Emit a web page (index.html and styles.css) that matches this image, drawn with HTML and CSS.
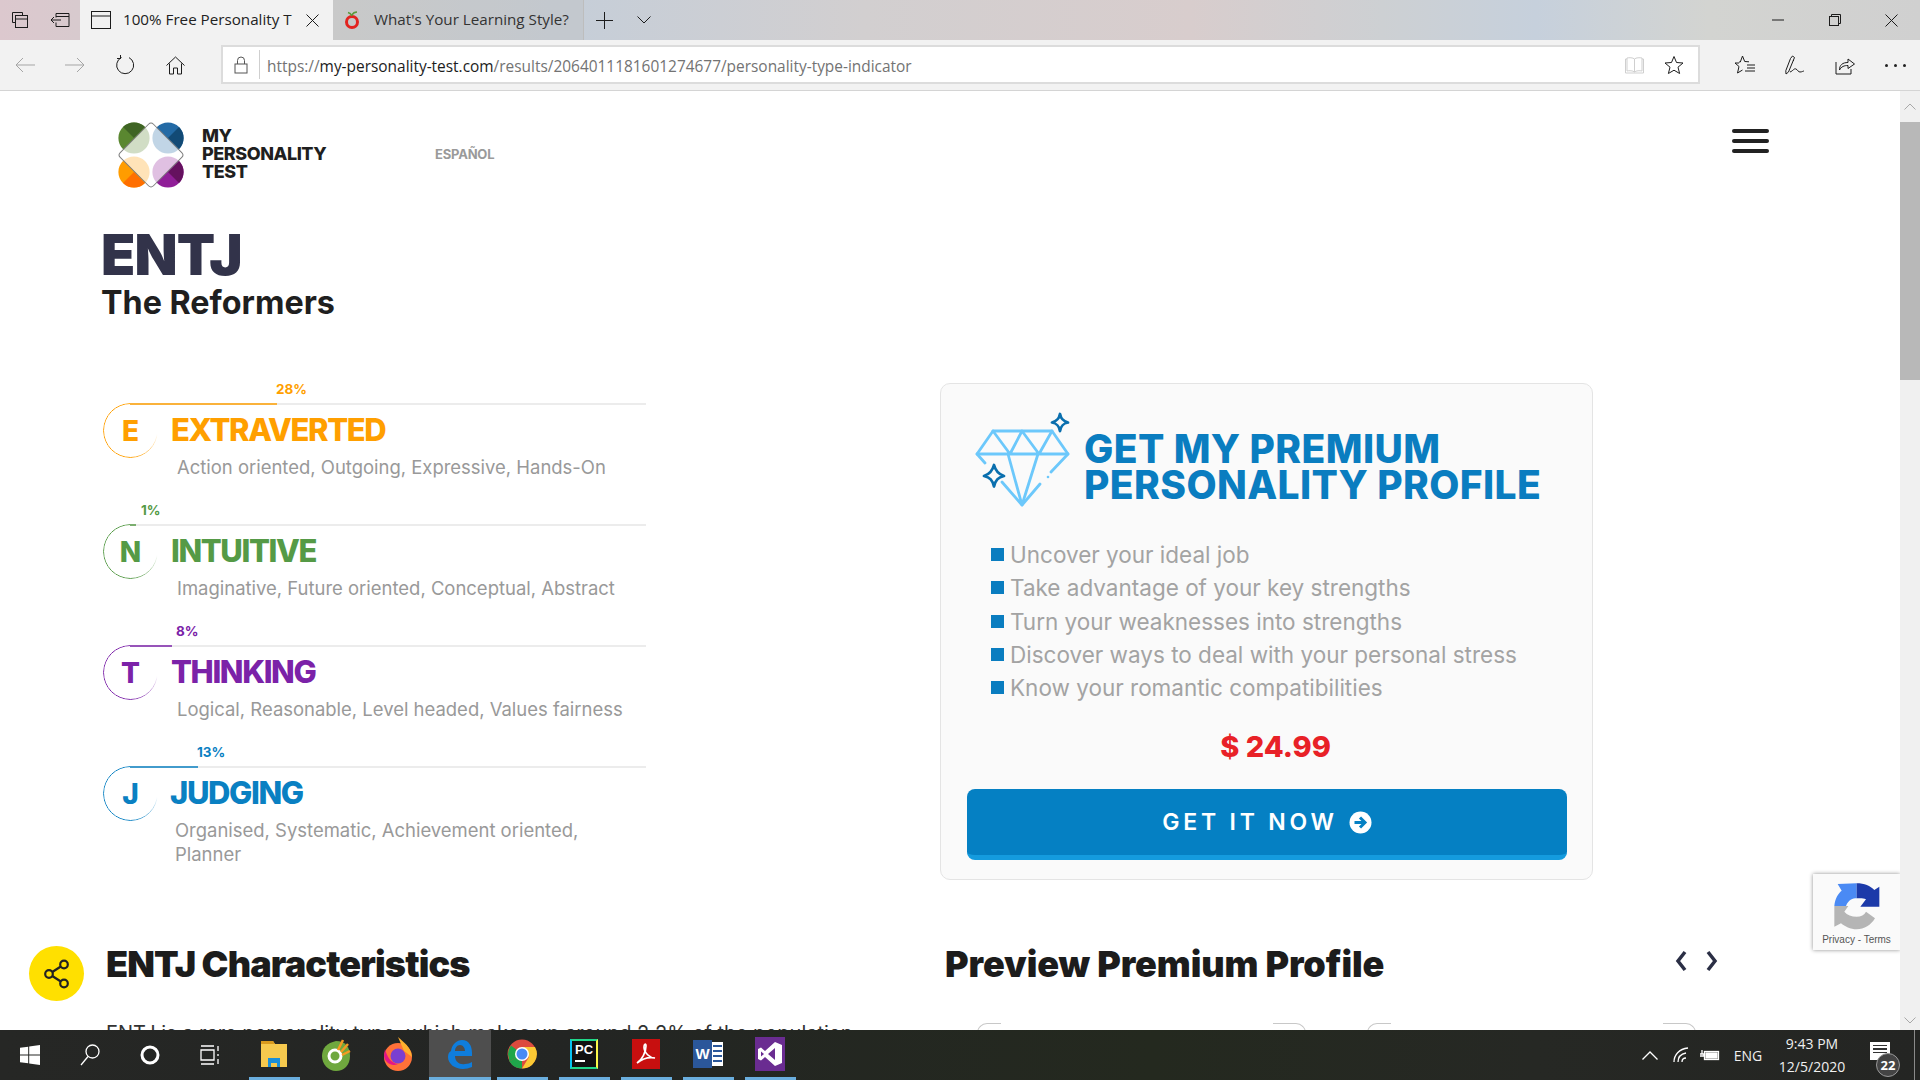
FILE: index.html
```html
<!DOCTYPE html>
<html lang="en">
<head>
<meta charset="utf-8">
<title>100% Free Personality Test</title>
<link rel="stylesheet" href="styles.css">
</head>
<body>
<div class="titlebar">
  <div class="slot40"><svg class="ic" width="18" height="18" viewBox="0 0 18 18"><path d="M1.5 1.5h10v3M1.5 1.5v10h3"/><rect x="4.5" y="4.5" width="12" height="12"/><path d="M4.5 8h12"/></svg></div>
  <div class="slot40"><svg class="ic" width="20" height="16" viewBox="0 0 20 16"><path d="M6 1.5h13v13H6v-4M6 1.5v4M6 4.5h13M11 8H1M4 5L1 8l3 3"/></svg></div>
  <div class="tab tab-active">
    <svg class="ic" width="20" height="18" viewBox="0 0 20 18"><rect x="0.5" y="0.5" width="19" height="17"/><path d="M0.5 5h19"/></svg>
    <span class="tab-text tab-text-a">100% Free Personality T</span>
    <svg class="ic tab-x" width="13" height="13" viewBox="0 0 13 13"><path d="M0.5 0.5l12 12M12.5 0.5l-12 12"/></svg>
  </div>
  <div class="tab tab-other">
    <svg width="16" height="20" viewBox="0 0 16 20"><circle cx="8" cy="12" r="5.5" fill="none" stroke="#e2231f" stroke-width="3"/><path d="M8 6C7 4 6 3 4 2.5M8 5c1-2 3-3 5-3" fill="none" stroke="#5a9a3a" stroke-width="1.6"/></svg>
    <span class="tab-text tab-text-b">What's Your Learning Style?</span>
  </div>
  <div class="slot40"><svg class="ic" width="17" height="17" viewBox="0 0 17 17"><path d="M8.5 0v17M0 8.5h17"/></svg></div>
  <div class="slot40"><svg class="ic" width="14" height="8" viewBox="0 0 14 8"><path d="M0.5 0.5L7 7l6.5-6.5"/></svg></div>
  <div class="spacer"></div>
  <div class="win"><svg class="ic" width="12" height="2" viewBox="0 0 12 2"><path d="M0 1h12"/></svg></div>
  <div class="win"><svg class="ic" width="12" height="12" viewBox="0 0 12 12"><rect x="0.5" y="2.5" width="9" height="9"/><path d="M2.5 2.5v-2h9v9h-2"/></svg></div>
  <div class="win"><svg class="ic" width="13" height="13" viewBox="0 0 13 13"><path d="M0.5 0.5l12 12M12.5 0.5l-12 12"/></svg></div>
</div>

<div class="toolbar">
  <div class="slot50 dim"><svg class="ic" width="20" height="16" viewBox="0 0 20 16"><path d="M20 8H1M8 1L1 8l7 7"/></svg></div>
  <div class="slot50 dim"><svg class="ic" width="20" height="16" viewBox="0 0 20 16"><path d="M0 8h19M12 1l7 7-7 7"/></svg></div>
  <div class="slot50"><svg class="ic" width="20" height="20" viewBox="0 0 20 20"><path d="M6.5 2.5A8.5 8.5 0 1 0 14 2.6M5.5 0v3.5H2"/></svg></div>
  <div class="slot50"><svg class="ic" width="19" height="19" viewBox="0 0 19 19"><path d="M0.5 9.5L9.5 1l9 8.5M3.5 7.5V18h4v-6h4v6h4V7.5"/></svg></div>
  <div class="address">
    <div class="lock"><svg class="ic lock-ic" width="14" height="18" viewBox="0 0 14 18"><rect x="1" y="8" width="12" height="9"/><path d="M3.5 8V4.5a3.5 3.5 0 0 1 7 0V8"/></svg></div>
    <div class="url"><span class="url-dim">https://</span>my-personality-test.com<span class="url-dim">/results/2064011181601274677/personality-type-indicator</span></div>
    <svg class="ic book" width="19" height="18" viewBox="0 0 19 18"><path d="M9.500 3C8 1.500 4 1.500 2 2v13c2-.5 6-.5 7.500 1 1.500-1.500 5.500-1.500 7.500-1V2c-2-.5-6-.5-7.500 1zM9.500 3v13M2 3H.5v14h18V3H17"/></svg>
    <svg class="ic star" width="20" height="20" viewBox="0 0 20 20"><path d="M10 1.500l2.500 6 6.500.5-5 4.200 1.600 6.300L10 15.200 4.400 18.500 6 12.200 1 8l6.500-.5z"/></svg>
  </div>
  <div class="slot50 first-right"><svg class="ic" width="22" height="20" viewBox="0 0 22 20"><path d="M8.500 1l2.200 5.500 4.300.3M5 8H1l4 3.500L3.500 18l5-3M13 10h8M13 13h8M11 16h10M8.500 1L6.300 7H5"/></svg></div>
  <div class="slot50"><svg class="ic" width="20" height="20" viewBox="0 0 20 20"><path d="M5.500 3.500l2-2.500 2 1.500L3.500 17 1 19l-.2-3.300zM8 5l1 1M5 17c3-1 4-4 6-3s2 3 4 3 3-1 4-1"/></svg></div>
  <div class="slot50"><svg class="ic" width="20" height="19" viewBox="0 0 20 19"><path d="M1 6v12h15v-5M4.500 14c0-5 3-7.500 8.500-7.500V3l6.500 5-6.500 4.500V9.500c-4 0-6.500 1-8.500 4.500z"/></svg></div>
  <div class="slot50"><span class="more"><i></i><i></i><i></i></span></div>
</div>

<div class="viewport">
  <div class="page">
    <header class="site-head">
      <a class="brand">
        <svg width="66" height="66" viewBox="0 0 66 66">
          <circle cx="16" cy="16" r="15.600" fill="#5a8730"/><path d="M16 16L5 5A15.600 15.600 0 0 1 27 5Z" fill="#3f6424"/>
          <circle cx="50" cy="16" r="15.600" fill="#236aa5"/><path d="M50 16L61 5A15.600 15.600 0 0 1 61 27Z" fill="#124a75"/>
          <circle cx="16" cy="50" r="15.600" fill="#ff9c00"/><path d="M16 50L27 61A15.600 15.600 0 0 1 5 61Z" fill="#ff6f00"/>
          <circle cx="50" cy="50" r="15.600" fill="#901e98"/><path d="M50 50L61 39A15.600 15.600 0 0 1 61 61Z" fill="#65115f"/>
          <rect x="9.500" y="9.500" width="47" height="47" rx="3.500" transform="rotate(45 33 33)" fill="#fff" fill-opacity=".72" stroke="#7d7d7d"/>
        </svg>
        <span class="brand-text">MY<br>PERSONALITY<br>TEST</span>
      </a>
      <span class="lang">ESPAÑOL</span>
      <span class="burger"><i></i><i></i><i></i></span>
    </header>

    <h1 class="type-code">ENTJ</h1>
    <h2 class="type-name">The Reformers</h2>

    <div class="result-grid">
      <div class="traits">
        <section class="trait t-e">
          <div class="pct" style="margin-left:173px">28%</div>
          <div class="bar"><div class="fill" style="width:147px"></div></div>
          <div class="trait-body"><div class="letter">E</div><div class="trait-copy"><h3>EXTRAVERTED</h3><p>Action oriented, Outgoing, Expressive, Hands-On</p></div></div>
        </section>
        <section class="trait t-n">
          <div class="pct" style="margin-left:38px">1%</div>
          <div class="bar"><div class="fill" style="width:6px"></div></div>
          <div class="trait-body"><div class="letter">N</div><div class="trait-copy"><h3>INTUITIVE</h3><p>Imaginative, Future oriented, Conceptual, Abstract</p></div></div>
        </section>
        <section class="trait t-t">
          <div class="pct" style="margin-left:73px">8%</div>
          <div class="bar"><div class="fill" style="width:42px"></div></div>
          <div class="trait-body"><div class="letter">T</div><div class="trait-copy"><h3>THINKING</h3><p>Logical, Reasonable, Level headed, Values fairness</p></div></div>
        </section>
        <section class="trait t-j">
          <div class="pct" style="margin-left:94px">13%</div>
          <div class="bar"><div class="fill" style="width:68px"></div></div>
          <div class="trait-body"><div class="letter">J</div><div class="trait-copy shift"><h3>JUDGING</h3><p>Organised, Systematic, Achievement oriented, Planner</p></div></div>
        </section>
      </div>

      <aside class="offer">
        <div class="offer-head">
          <svg class="gem" width="120" height="120" viewBox="0 0 120 120">
            <g fill="none" stroke="#6cc8fb" stroke-width="2.800" stroke-linejoin="round" stroke-linecap="round">
              <path d="M25 61L17 52 33 29H92L108 52 91 70M80 82L62 103 42 80"/>
              <path d="M17 52H108M33 29L50 52 62 29 79 52 92 29M48 52L62 103 78 52"/>
            </g>
            <circle cx="88" cy="75" r="1.300" fill="#6cc8fb"/>
            <path d="M100 12c1 5 3 7 8 8.500-5 1-7 3-8 8.500-1-5.500-3-7.500-8-8.500 5-1.500 7-3.500 8-8.500z" fill="#fafafa" stroke="#0a6fae" stroke-width="2.800" stroke-linejoin="round"/>
            <path d="M34 63c1.500 6 4 9 10 11-6 1.500-8.500 4-10 10.500-1.500-6.500-4-9-10-10.500 6-2 8.500-5 10-11z" fill="#fafafa" stroke="#0a6fae" stroke-width="2.800" stroke-linejoin="round"/>
          </svg>
          <h2 class="offer-title">GET MY PREMIUM<br>PERSONALITY PROFILE</h2>
        </div>
        <ul class="perks">
          <li>Uncover your ideal job</li>
          <li>Take advantage of your key strengths</li>
          <li>Turn your weaknesses into strengths</li>
          <li>Discover ways to deal with your personal stress</li>
          <li>Know your romantic compatibilities</li>
        </ul>
        <div class="price">$ 24.99</div>
        <a class="buy">GET IT NOW
          <svg width="23" height="23" viewBox="0 0 23 23"><circle cx="11.500" cy="11.500" r="11" fill="#fff"/><path d="M5.500 11.500h10M11 6.500l5 5-5 5" fill="none" stroke="#0580c3" stroke-width="3"/></svg>
        </a>
      </aside>
    </div>

    <div class="lower-grid">
      <div class="lower-left">
        <h2 class="section-title title-a">ENTJ Characteristics</h2>
        <p class="lead">ENTJ is a rare personality type, which makes up around 2.2% of the population</p>
      </div>
      <div class="lower-right">
        <div class="preview-head">
          <h2 class="section-title title-b">Preview Premium Profile</h2>
          <span class="chev-group">
            <svg class="chev" width="14" height="22" viewBox="0 0 14 22"><path d="M11 2L4 11l7 9"/></svg>
            <svg class="chev" width="14" height="22" viewBox="0 0 14 22"><path d="M3 2l7 9-7 9"/></svg>
          </span>
        </div>
        <div class="previews"><div class="preview"></div><div class="preview"></div></div>
      </div>
    </div>

    <a class="share"><svg width="28" height="30" viewBox="0 0 28 30"><g fill="none" stroke="#222" stroke-width="2.200"><circle cx="21" cy="5.500" r="3.800"/><circle cx="21" cy="24.500" r="3.800"/><circle cx="6" cy="15" r="3.800"/><path d="M9.300 13L17.800 7.500M9.300 17l8.500 5.500"/></g></svg></a>

    <div class="captcha">
      <svg width="48" height="48" viewBox="66 36 144 144">
        <path d="M70 108C72 85 82 70 92 62L80 42 137 40V85C125 85 112 90 105 108Z" fill="#4a8af4"/>
        <path d="M137 40C160 40 178 48 190 60L205 50V110H148L165 88C157 84 148 85 137 85Z" fill="#1c3aa9"/>
        <path d="M70 108H112L100 125C108 135 122 140 137 140 150 140 160 135 165 125L192 145C180 165 160 178 137 178 118 178 102 170 90 160L70 170Z" fill="#b5b5b5"/>
      </svg>
      <span class="captcha-text">Privacy - Terms</span>
    </div>
  </div>
  <div class="scrollbar">
    <div class="sb-btn"><svg class="ic sb-ic" width="12" height="7" viewBox="0 0 12 7"><path d="M.5 6.500L6 1l5.500 5.500"/></svg></div>
    <div class="sb-thumb"></div>
    <div class="sb-track"></div>
    <div class="sb-btn sb-down"><svg class="ic sb-ic" width="12" height="7" viewBox="0 0 12 7"><path d="M.5.500L6 6l5.500-5.500"/></svg></div>
  </div>
</div>

<footer class="taskbar">
  <div class="tb-sys"><svg width="20" height="20" viewBox="0 0 20 20" fill="#fff"><path d="M0 2.800L8.200 1.700V9.500H0zM9.200 1.500L20 0V9.500H9.200zM0 10.500H8.200V18.300L0 17.200zM9.200 10.500H20V20L9.200 18.500z"/></svg></div>
  <div class="tb-sys"><svg class="ic-w" width="20" height="22" viewBox="0 0 20 22"><circle cx="12.500" cy="7.500" r="6.500"/><path d="M8 12.500L1 21"/></svg></div>
  <div class="tb-sys"><svg width="20" height="20" viewBox="0 0 20 20"><circle cx="10" cy="10" r="8" fill="none" stroke="#fff" stroke-width="3"/></svg></div>
  <div class="tb-sys"><svg class="ic-w" width="20" height="20" viewBox="0 0 20 20"><path d="M1 1h13M1 19h13M1 5h13v10H1zM18 1v5M18 9v2M18 14v5"/></svg></div>
  <div class="tb-apps">
    <div class="app on"><svg width="28" height="30" viewBox="0 0 28 30"><path d="M1 2h12l2 3h12v23H1z" fill="#f6c94e"/><path d="M1 2h12l2 3H1z" fill="#d99a1e"/><path d="M8 19h12v9h-3v-4h-6v4H8z" fill="#1b8fd8"/></svg></div>
    <div class="app"><svg width="30" height="34" viewBox="0 0 30 34"><path d="M15 4c9 0 14 6 14 15s-6 15-14 15S1 27 1 19 6 6 15 4z" fill="#6fa83e"/><circle cx="14" cy="19" r="6" fill="none" stroke="#fff" stroke-width="3"/><path d="M17 13L22 3M20 15l7-8M21 18l8-4" stroke="#f59a23" stroke-width="2.500"/></svg></div>
    <div class="app"><svg width="30" height="34" viewBox="0 0 30 34"><circle cx="15" cy="20" r="14" fill="#ff7139"/><path d="M15 0c5 5 13 9 14 20l-8-6z" fill="#ffb02e"/><circle cx="15" cy="19" r="7.500" fill="#7a3fd1"/><path d="M2 12c2 8 6 14 13 15-6 3-13-1-14-8z" fill="#e31587"/></svg></div>
    <div class="app on active"><svg width="26" height="30" viewBox="0 0 26 30"><path d="M4 12C5 5 10 1 15 1c7 0 10 6 10 13v3H8c0 6 5 9 10 8 3 0 5-1 7-2v5c-3 1-6 2-9 2C8 30 1 25 1 18c0-3 1-5 3-6zm4 0h10c0-3-2-6-5-6s-5 3-5 6z" fill="#0f7ddc"/></svg></div>
    <div class="app on"><svg width="30" height="30" viewBox="0 0 30 30"><circle cx="15" cy="15" r="14.500" fill="#dd4b3e"/><path d="M15 15L2.500 22.500A14.500 14.500 0 0 0 15 29.500z" fill="#1fa64a"/><path d="M15 15L2.500 22.500 1 15a14.500 14.500 0 0 1 3-8.500z" fill="#1fa64a"/><path d="M15 8h13a14.500 14.500 0 0 1-13 21.500L22 18z" fill="#fcc934"/><circle cx="15" cy="15" r="7" fill="#fff"/><circle cx="15" cy="15" r="5.500" fill="#4a8af4"/></svg></div>
    <div class="app on"><span class="pc"><span class="pc-t">PC</span><i></i></span></div>
    <div class="app on"><svg width="28" height="30" viewBox="0 0 28 30"><rect width="28" height="30" fill="#c70f0f"/><path d="M5 24c5-3 9-11 9-17 0-3-2-2-2 1 0 6 6 11 11 11-6-1-13 1-18 5z" fill="none" stroke="#fff" stroke-width="1.700"/></svg></div>
    <div class="app on"><span class="word"><span class="word-l">W</span><span class="word-r"><i></i><i></i><i></i><i></i></span></span></div>
    <div class="app on"><svg width="30" height="34" viewBox="0 0 30 34"><rect width="30" height="34" fill="#6a2c91"/><path d="M20 5L10 14 6 10.500 3 12V22L6 23.500 10 20 20 29 27 26V8ZM20 11V23L13 17ZM6 14.500L9 17 6 19.500Z" fill="#fff" fill-rule="evenodd"/></svg></div>
  </div>
  <div class="tray">
    <div class="tr tr-caret"><svg class="ic-w" width="16" height="9" viewBox="0 0 16 9"><path d="M.5 8.500L8 1l7.500 7.500"/></svg></div>
    <div class="tr tr-wifi"><svg class="ic-w" width="16" height="16" viewBox="0 0 16 16"><path d="M1 15C1 8 6 2 15 1M5 15c0-5 3-8 8-9M9 15c0-2 1-4 4-4"/></svg></div>
    <div class="tr tr-batt"><svg class="ic-w" width="20" height="12" viewBox="0 0 20 12"><rect x="4.500" y="2.500" width="14" height="8"/><rect x="6" y="4" width="11" height="5" fill="#fff"/><path d="M2 1v4M0 5h4v2H0"/></svg></div>
    <div class="tr tr-eng">ENG</div>
    <div class="tr tr-clock"><span>9:43 PM</span><span>12/5/2020</span></div>
    <div class="tr tr-note"><span class="note"><i></i><i></i><i></i></span><span class="badge">22</span></div>
    <div class="tr tr-show"></div>
  </div>
</footer>
</body>
</html>
```
FILE: styles.css
```css
* { box-sizing: border-box; }
html, body { margin: 0; height: 100%; }
body {
  width: 1920px; height: 1080px; overflow: hidden;
  display: flex; flex-direction: column;
  font-family: "Open Sans", "Liberation Sans", sans-serif;
  background: #fff;
}
i { display: block; }
.ic { fill: none; stroke: #1c1c1c; stroke-width: 1; display: block; }
.ic-w { fill: none; stroke: #fff; stroke-width: 1.300; display: block; }

/* title bar */
.titlebar {
  height: 40px; flex: none; display: flex; align-items: stretch;
  background: linear-gradient(90deg, #dcc8ce 0, #d8cace 4%, #cfcfcf 17%, #c6ced8 30%, #d2cfd0 45%, #d8cdcd 62%, #cdd0d3 72%, #c6d0dc 80%, #d3d4d1 89%, #d0d0d0 100%);
}
.slot40 { width: 40px; display: flex; align-items: center; justify-content: center; }
.tab { display: flex; align-items: center; flex: none; }
.tab-active { width: 253px; background: #f2f2f2; padding-left: 11px; }
.tab-other { width: 251px; padding-left: 11px; border-right: 1px solid #bdbdbd; background: rgba(190,190,190,.35); }
.tab-text { font-size: 15.200px; line-height: 20px; margin-top: -2px; color: #222; white-space: nowrap; overflow: hidden; }
.tab-text-a { margin-left: 12px; width: 170px; }
.tab-text-b { margin-left: 14px; color: #333; }
.tab-x { margin-left: 13px; }
.spacer { flex: 1; }
.win { width: 57px; display: flex; align-items: center; justify-content: center; }

/* toolbar */
.toolbar {
  height: 51px; flex: none; display: flex; align-items: flex-start;
  background: #f2f2f2; border-bottom: 1px solid #d4d4d4;
}
.slot50 { width: 50px; height: 50px; display: flex; align-items: center; justify-content: center; }
.dim .ic { stroke: #a5a5a5; }
.address {
  width: 1479px; height: 39px; margin: 5px 0 0 21px; flex: none;
  background: #fff; border: 2px solid #dcdcdc;
  display: flex; align-items: center;
}
.lock { width: 37px; height: 29px; border-right: 1px solid #cfcfcf; display: flex; align-items: center; justify-content: center; }
.lock-ic { stroke: #555; }
.url { flex: 1; padding: 3px 0 0 7px; font-size: 15.430px; color: #1c1c1c; white-space: nowrap; }
.url-dim { color: #737373; }
.book { stroke: #cfcfcf; margin-right: 20px; }
.star { margin-right: 14px; }
.first-right { margin-left: 20px; }
.more { display: flex; gap: 6px; }
.more i { width: 3px; height: 3px; background: #222; border-radius: 50%; }

/* page */
.viewport { flex: 1; display: flex; min-height: 0; }
.page { flex: 1; position: relative; overflow: hidden; font-family: Inter, "Liberation Sans", sans-serif; color: #1f1f1f; }
.site-head { display: flex; align-items: flex-start; padding: 31px 131px 0 118px; height: 97px; }
.brand { display: flex; align-items: center; width: 317px; flex: none; }
.brand-text { margin: -2px 0 0 18px; font-size: 18px; line-height: 18px; font-weight: 800; letter-spacing: -.45px; color: #1f1f1f; }
.lang { font-size: 13px; font-weight: 700; color: #9a9a9a; margin-top: 25px; line-height: 14px; letter-spacing: -.2px; }
.burger { margin-left: auto; margin-top: 7px; width: 37px; display: flex; flex-direction: column; gap: 6px; }
.burger i { height: 4px; background: #222; border-radius: 2px; }
.type-code { margin: 39px 0 0 101px; font-size: 56px; line-height: 56px; font-weight: 900; letter-spacing: -.8px; color: #32334a; }
.type-name { margin: 0 0 0 101px; font-size: 32.300px; line-height: 40px; font-weight: 700; color: #1f1f1f; }

.result-grid { display: grid; grid-template-columns: 543px 653px; column-gap: 294px; margin: 58px 0 0 103px; }
.trait { height: 121px; }
.trait:last-child { height: auto; }
.pct { font-size: 13.500px; font-weight: 700; line-height: 16px; margin-bottom: 6px; }
.bar { height: 2px; background: #ececec; margin-left: 27px; }
.fill { height: 2px; background: currentColor; opacity: .75; }
.t-e { color: #ff9f00; }
.t-n { color: #559a46; }
.t-t { color: #7b22a8; }
.t-j { color: #0a80c2; }
.trait-body { display: flex; align-items: flex-start; margin-top: -2px; }
.letter {
  position: relative; width: 55px; height: 55px; flex: none;
  display: flex; align-items: center; justify-content: center;
  font-size: 28px; font-weight: 800; line-height: 55px; padding-top: 2px;
}
.letter::before {
  content: ""; position: absolute; inset: 0; border-radius: 50%;
  border: 1.500px solid currentColor;
  -webkit-mask: conic-gradient(transparent 0 27%, #000 50%, #000 100%);
  mask: conic-gradient(transparent 0 27%, #000 50%, #000 100%);
}
.trait-copy { margin-left: 13px; width: 456px; }
.trait-copy.shift { margin-left: 12px; }
.trait-copy h3 { margin: 8px 0 0; font-size: 31px; line-height: 38px; font-weight: 800; letter-spacing: -1.400px; }
.trait-copy p { margin: 6px 0 0 6px; font-size: 18.470px; line-height: 24px; color: #999; width: 450px; }
.trait-copy.shift p { margin-left: 5px; }

.offer { height: 497px; margin-top: 2px; background: #fafafa; border: 1px solid #e4e4e4; border-radius: 10px; padding: 18px 25px 0 26px; }
.offer-head { display: flex; align-items: flex-start; margin-left: -7px; }
.gem { flex: none; }
.offer-title { margin: 29px 0 0 4px; font-size: 39px; line-height: 36px; font-weight: 800; letter-spacing: .4px; color: #0a7dc0; white-space: nowrap; }
.perks { list-style: none; margin: 16px 0 0; padding: 0 0 0 24px; }
.perks li { font-size: 22.500px; line-height: 33.300px; color: #a3a3a3; display: flex; align-items: center; }
.perks li::before { content: ""; width: 13px; height: 13px; background: #0a7dc0; margin-right: 6px; flex: none; }
.price { margin: 23px 0 0 17px; text-align: center; font-size: 29px; line-height: 40px; font-weight: 800; color: #e82127; }
.buy {
  margin-top: 22px; height: 71px; display: flex; align-items: center; justify-content: center; gap: 11px;
  background: #0580c3; border-bottom: 5px solid #149bde; border-radius: 8px;
  color: #fff; font-size: 23px; font-weight: 600; letter-spacing: 3.800px;
}

.lower-grid { display: grid; grid-template-columns: 842px 1fr; margin: 62px 0 0 103px; }
.lower-left { padding-left: 3px; }
.section-title { margin: 0; font-size: 36px; line-height: 44px; font-weight: 900; color: #1c1c1c; white-space: nowrap; }
.title-a { letter-spacing: -.85px; }
.title-b { letter-spacing: -.1px; }
.lead { margin: 32px 0 0; font-size: 20px; line-height: 30px; color: #333; white-space: nowrap; }
.preview-head { display: flex; align-items: flex-start; }
.preview-head .section-title { width: 729px; }
.chev-group { display: flex; gap: 17px; margin-top: 8px; }
.chev { fill: none; stroke: #2b2f45; stroke-width: 3.500; display: block; }
.previews { display: grid; grid-template-columns: 329px 329px; column-gap: 61px; margin: 37px 0 0 32px; }
.preview { height: 60px; display: flex; justify-content: space-between; }
.preview::before, .preview::after { content: ""; height: 20px; border-top: 1.500px solid #c8c8c8; }
.preview::before { width: 23px; border-left: 1.500px solid #c8c8c8; border-top-left-radius: 10px; }
.preview::after { width: 32px; border-right: 1.500px solid #c8c8c8; border-top-right-radius: 10px; }

.share {
  position: absolute; left: 29px; top: 855px; width: 55px; height: 55px; border-radius: 50%;
  background: #ffe000; display: flex; align-items: center; justify-content: center;
}
.captcha {
  position: absolute; right: 0; top: 783px; width: 87px; height: 76px;
  background: #fafafa; box-shadow: 0 0 4px rgba(0,0,0,.45);
  display: flex; flex-direction: column; align-items: center; padding-top: 8px;
}
.captcha-text { font-family: "Liberation Sans", sans-serif; font-size: 10px; line-height: 12px; color: #555; margin-top: 4px; white-space: nowrap; }

.scrollbar { width: 20px; flex: none; background: #f0f0f0; display: flex; flex-direction: column; }
.sb-btn { height: 31px; flex: none; display: flex; align-items: center; justify-content: center; }
.sb-ic { stroke: #a8a8a8; }
.sb-thumb { height: 258px; background: #b8b8b8; flex: none; }
.sb-track { flex: 1; }
.sb-down { height: 20px; }

/* taskbar */
.taskbar {
  height: 50px; flex: none; display: flex; align-items: stretch;
  background: linear-gradient(90deg, #262725 0, #232523 30%, #24291f 60%, #262824 80%, #242523 100%);
  color: #fff;
}
.tb-sys { width: 60px; display: flex; align-items: center; justify-content: center; }
.tb-apps { display: flex; margin-left: 3px; }
.app { width: 62px; position: relative; display: flex; align-items: center; justify-content: center; padding-bottom: 2px; }
.app.on::after { content: ""; position: absolute; left: 6px; right: 5px; bottom: 0; height: 3px; background: #6aaede; }
.app.active { background: #4e4e4e; }
.app.active::after { left: 0; right: 0; }
.pc { width: 28px; height: 30px; background: #111; border: 2px solid; border-color: #21d789 #fcf84a #21d789 #07c3f2; display: flex; flex-direction: column; padding: 2px 0 0 3px; }
.pc-t { font-family: "Liberation Sans", sans-serif; font-weight: 700; font-size: 13px; line-height: 13px; color: #fff; }
.pc i { width: 10px; height: 2px; background: #fff; margin-top: 4px; }
.word { width: 30px; height: 30px; display: flex; position: relative; align-items: center; }
.word-l { width: 19px; height: 28px; background: #2b579a; font-family: "Liberation Sans", sans-serif; font-weight: 700; font-size: 15px; line-height: 28px; text-align: center; color: #fff; }
.word-r { flex: 1; height: 24px; background: #fff; display: flex; flex-direction: column; gap: 3px; padding: 3px 1px; }
.word-r i { height: 2px; background: #2b579a; }
.tray { margin-left: auto; display: flex; align-items: stretch; }
.tr { display: flex; align-items: center; justify-content: center; flex: none; }
.tr-caret { width: 30px; }
.tr-wifi { width: 32px; }
.tr-batt { width: 26px; }
.tr-eng { width: 50px; font-size: 14px; color: #f0f0f0; }
.tr-clock { width: 78px; flex-direction: column; font-size: 14px; line-height: 23px; color: #f0f0f0; white-space: nowrap; }
.tr-note { width: 63px; position: relative; }
.note { width: 20px; height: 18px; background: #fff; display: flex; flex-direction: column; gap: 2px; padding: 3px; margin: -9px 0 0 -5px; }
.note i { height: 1.500px; background: #333; }
.badge {
  position: absolute; left: 25px; top: 23px; width: 24px; height: 24px; border-radius: 50%;
  background: #444; border: 1px solid #999; font-size: 13px; font-weight: 700; line-height: 22px; text-align: center;
}
.tr-show { width: 6px; border-left: 1px solid #8a8a8a; }
```
